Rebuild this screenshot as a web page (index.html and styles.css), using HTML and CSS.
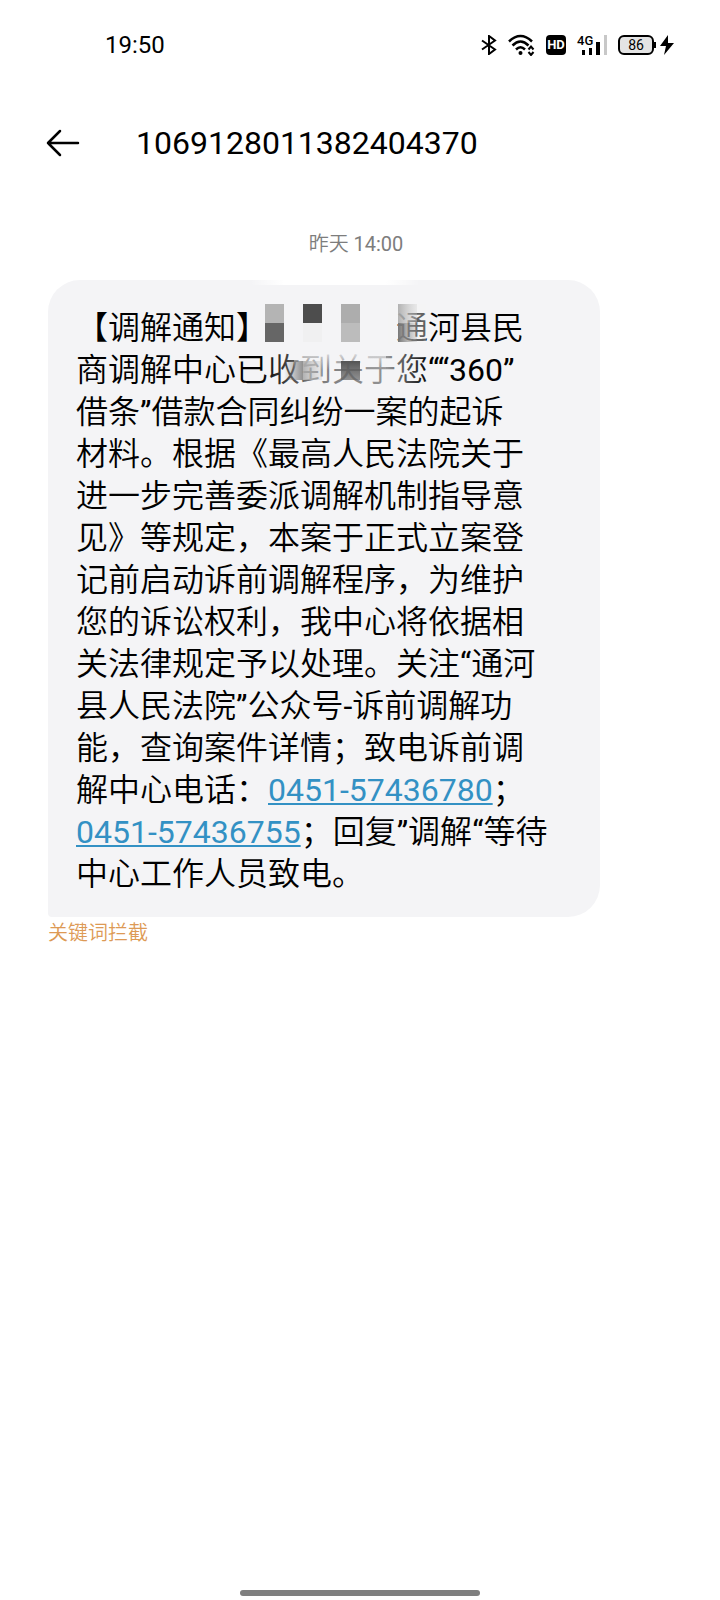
FILE: index.html
```
<!DOCTYPE html>
<html lang="zh-CN">
<head>
    <meta charset="UTF-8">
    <meta name="viewport" content="width=device-width, initial-scale=1.0">
    <title>1069128011382404370</title>
    <link rel="stylesheet" href="styles.css">
</head>
<body>
    <div class="status-bar">
        <span class="clock">19:50</span>
        <div class="status-icons">
            <svg width="16" height="20" viewBox="0 0 16 20" fill="none" stroke="#000" stroke-width="2">
                <path d="M1 5.500L14 14.500L8 19V1L14 5.500L1 14.500"/>
            </svg>
            <svg width="27" height="22" viewBox="0 0 27 22" fill="none" stroke="#000" stroke-width="2.500">
                <path d="M1 7.500Q12.500-3.500 24 7.500M4.500 11.500Q12.500 3.500 20.500 11.500M8 15.500Q12.500 11 17 15.500"/>
                <circle cx="12.500" cy="19" r="2" fill="#000" stroke="none"/>
                <path d="M20.500 15.500L23 12.500L25.500 15.500M20.500 18L23 21L25.500 18" stroke-width="2"/>
            </svg>
            <span class="hd">HD</span>
            <span class="signal">
                <svg width="30" height="22" viewBox="0 0 30 22" fill="#000">
                    <path d="M5 16h3v5H5zM12 14h3v7h-3zM19 8h4v13h-4z"/>
                    <path d="M27 1h3v20h-3z" fill="#c8c8c8"/>
                </svg>
                <span class="net">4G</span>
            </span>
            <span class="battery">86</span>
            <svg class="bolt" width="14" height="20" viewBox="0 0 14 20" fill="#000">
                <path d="M8 0L0 11H6L4 20L14 8H8Z"/>
            </svg>
        </div>
    </div>

    <header class="title-bar">
        <button class="back" aria-label="返回">
            <svg width="34" height="28" viewBox="0 0 34 28" fill="none" stroke="#000" stroke-width="2.500" stroke-linecap="round" stroke-linejoin="round">
                <path d="M14 2L2 14L14 26M2 14H32"/>
            </svg>
        </button>
        <h1 class="number">1069128011382404370</h1>
    </header>

    <main class="thread">
        <p class="time">昨天 <span class="latin">14:00</span></p>
        <div class="bubble">
            <p class="message">
                【调解通知】<span class="gap"></span>通河县民<br>
                商调解中心已收到关于您<span class="latin">““360”</span><br>
                借条<span class="latin">”</span>借款合同纠纷一案的起诉<br>
                材料。根据《最高人民法院关于<br>
                进一步完善委派调解机制指导意<br>
                见》等规定，本案于正式立案登<br>
                记前启动诉前调解程序，为维护<br>
                您的诉讼权利，我中心将依据相<br>
                关法律规定予以处理。关注<span class="latin">“</span>通河<br>
                县人民法院<span class="latin">”</span>公众号<span class="latin">-</span>诉前调解功<br>
                能，查询案件详情；致电诉前调<br>
                解中心电话：<a href="tel:0451-57436780">0451-57436780</a>；<br>
                <a href="tel:0451-57436755">0451-57436755</a>；回复<span class="latin">”</span>调解<span class="latin">“</span>等待<br>
                中心工作人员致电。
            </p>
            <!-- mosaic over the name -->
            <svg class="mosaic" width="190" height="110" viewBox="0 0 190 110">
                <defs>
                    <linearGradient id="edge">
                        <stop offset="0" stop-color="#fff" stop-opacity="0"/>
                        <stop offset="0.2" stop-color="#fff"/>
                        <stop offset="0.8" stop-color="#fff"/>
                        <stop offset="1" stop-color="#fff" stop-opacity="0"/>
                    </linearGradient>
                    <linearGradient id="fade">
                        <stop offset="0" stop-color="#f4f4f6" stop-opacity="0"/>
                        <stop offset="0.3" stop-color="#f4f4f6" stop-opacity="0.5"/>
                        <stop offset="0.75" stop-color="#f4f4f6" stop-opacity="0.6"/>
                        <stop offset="1" stop-color="#f4f4f6" stop-opacity="0"/>
                    </linearGradient>
                    <linearGradient id="top" x1="0" y1="0" x2="0" y2="1">
                        <stop offset="0" stop-color="#f4f4f6"/>
                        <stop offset="1" stop-color="#f4f4f6" stop-opacity="0"/>
                    </linearGradient>
                    <linearGradient id="dark">
                        <stop offset="0" stop-color="#777" stop-opacity="0"/>
                        <stop offset="1" stop-color="#777" stop-opacity="0.8"/>
                    </linearGradient>
                    <linearGradient id="light">
                        <stop offset="0" stop-color="#aaa" stop-opacity="0.9"/>
                        <stop offset="1" stop-color="#ccc" stop-opacity="0.3"/>
                    </linearGradient>
                    <linearGradient id="grey">
                        <stop offset="0" stop-color="#777"/>
                        <stop offset="1" stop-color="#999" stop-opacity="0.2"/>
                    </linearGradient>
                    <linearGradient id="down" x1="0" y1="0" x2="0" y2="1">
                        <stop offset="0" stop-color="#555"/>
                        <stop offset="1" stop-color="#666" stop-opacity="0.7"/>
                    </linearGradient>
                </defs>
                <path d="M0 0H170V5H0Z" fill="url(#edge)"/>
                <path d="M10 66H180V106H10Z" fill="url(#fade)"/>
                <path d="M44 68H136V90H44Z" fill="url(#top)"/>
                <path d="M138 24H176V64H138Z" fill="#f4f4f6" opacity="0.4"/>
                <path d="M15 24h19v19H15z" fill="#b4b4b4"/>
                <path d="M15 43h19v19H15z" fill="#666"/>
                <path d="M53 24h19v19H53z" fill="#4d4d4d"/>
                <path d="M53 43h19v19H53z" fill="#f0f0f1"/>
                <path d="M91 24h19v19H91z" fill="#adadad"/>
                <path d="M91 43h19v19H91z" fill="#bcbcbc"/>
                <path d="M148 24h19v19h-19z" fill="url(#light)"/>
                <path d="M148 43h19v19h-19z" fill="url(#grey)"/>
                <path d="M34 81h19v19H34z" fill="url(#dark)"/>
                <path d="M53 81h19v19H53z" fill="url(#light)"/>
                <path d="M91 81h19v19H91z" fill="url(#down)"/>
            </svg>
        </div>
        <p class="notice">关键词拦截</p>
    </main>

    <div class="home-bar"></div>
</body>
</html>
```
FILE: styles.css
```
* {
    box-sizing: border-box;
}

body {
    display: flex;
    flex-direction: column;
    min-height: 100vh;
    margin: 0;
    background: #fff;
    color: #000;
    font-family: Roboto, "Noto Sans CJK SC", sans-serif;
}

h1,
p {
    margin: 0;
    font-weight: 400;
}

/* status bar */
.status-bar {
    display: flex;
    justify-content: space-between;
    align-items: center;
    height: 90px;
    padding: 0 46px 0 105px;
}

.clock {
    font-size: 24px;
}

.status-icons {
    display: flex;
    align-items: center;
}

.status-icons > * {
    flex: none;
    margin-right: 11px;
}

.hd {
    width: 20px;
    height: 20px;
    border-radius: 4px;
    background: #000;
    color: #fff;
    font-size: 13px;
    font-weight: 700;
    line-height: 20px;
    text-align: center;
}

.signal {
    position: relative;
    height: 22px;
}

.net {
    position: absolute;
    top: 0;
    left: 0;
    font-size: 13px;
    font-weight: 500;
    line-height: 13px;
}

.battery {
    position: relative;
    width: 36px;
    height: 20px;
    border: 2px solid #000;
    border-radius: 6px;
    background: #e4e4e4;
    font-size: 14px;
    font-weight: 400;
    line-height: 16px;
    text-align: center;
}

/* battery tip */
.battery::after {
    content: "";
    position: absolute;
    top: 5px;
    right: -4px;
    width: 2px;
    height: 6px;
    background: #000;
}

.status-icons .battery {
    margin-right: 6px;
}

.status-icons .bolt {
    margin-right: 0;
}

/* title */
.title-bar {
    display: flex;
    align-items: center;
    gap: 56px;
    height: 105px;
    padding: 0 46px;
}

.back {
    display: flex;
    padding: 0;
    border: 0;
    background: none;
}

.number {
    font-size: 32px;
    line-height: 42px;
}

/* messages */
.thread {
    flex: 1;
    padding: 34px 56px 0 48px;
}

.time {
    margin-bottom: 21px;
    color: #7d7d7d;
    font-size: 20px;
    font-weight: 350;
    line-height: 30px;
    text-align: center;
}

.bubble {
    position: relative;
    margin-right: 64px;
    padding: 27px 28px 22px;
    border-radius: 32px 32px 32px 4px;
    background: #f4f4f6;
}

.message {
    font-size: 32px;
    font-weight: 350;
    line-height: 42px;
}

.message a {
    color: #3391c4;
    font-weight: 400;
    text-decoration-thickness: 2px;
    text-underline-offset: 2px;
}

.latin {
    font-weight: 400;
}

.gap {
    display: inline-block;
    width: 128px;
}

.mosaic {
    position: absolute;
    top: 0;
    left: 202px;
}

.notice {
    color: #dd9a55;
    font-size: 20px;
    font-weight: 350;
    line-height: 32px;
}

.home-bar {
    align-self: center;
    width: 240px;
    height: 6px;
    margin-bottom: 4px;
    border-radius: 3px;
    background: #7f7f7f;
}
```
